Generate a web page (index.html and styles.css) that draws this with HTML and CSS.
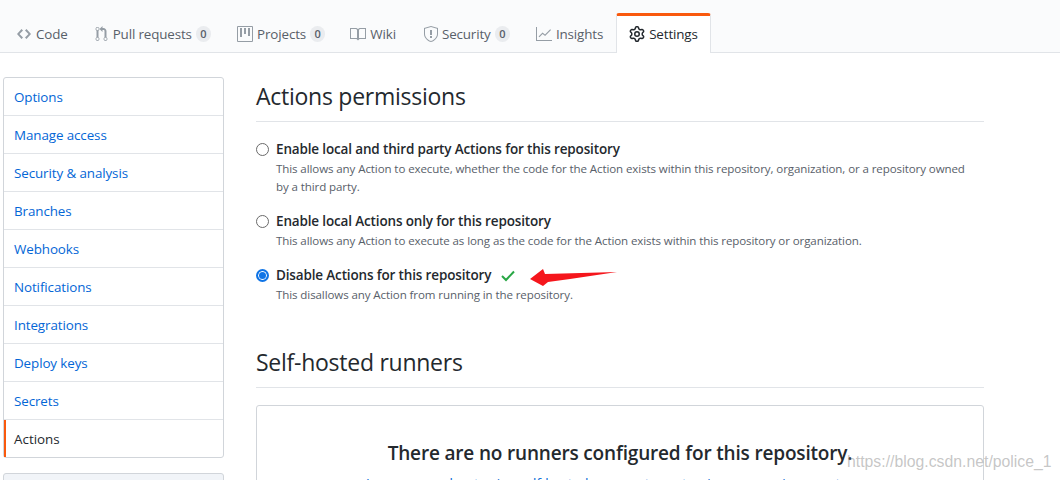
FILE: index.html
```html
<!DOCTYPE html>
<html lang="en">
<head>
<meta charset="utf-8">
<title>Actions permissions</title>
<link rel="stylesheet" href="styles.css">
</head>
<body>
<nav class="tabs">
  <a class="tab"><svg class="ico" viewBox="0 0 14 16" width="16" height="16"><path d="M9.5 3L8 4.5 11.5 8 8 11.5 9.5 13 14 8 9.5 3zm-5 0L0 8l4.5 5L6 11.5 2.5 8 6 4.5 4.5 3z"/></svg>Code</a>
  <a class="tab"><svg class="ico" viewBox="0 0 12 16" width="15" height="16"><path fill-rule="evenodd" d="M11 11.28V5c-.03-.78-.34-1.47-.94-2.06C9.46 2.35 8.78 2.03 8 2H7V0L4 3l3 3V4h1c.27.02.48.11.69.31.21.2.3.42.31.69v6.28A1.993 1.993 0 0010 15a1.993 1.993 0 001-3.72zm-1 2.92c-.66 0-1.2-.55-1.2-1.2 0-.65.55-1.2 1.2-1.2.65 0 1.2.55 1.2 1.2 0 .65-.55 1.2-1.2 1.2zM4 3c0-1.11-.89-2-2-2a1.993 1.993 0 00-1 3.72v6.56A1.993 1.993 0 002 15a1.993 1.993 0 001-3.72V4.72c.59-.34 1-.98 1-1.72zm-.8 10c0 .66-.55 1.2-1.2 1.2-.65 0-1.2-.55-1.2-1.2 0-.65.55-1.2 1.2-1.2.65 0 1.2.55 1.2 1.2zM2 4.2C1.34 4.2.8 3.65.8 3c0-.65.55-1.2 1.2-1.2.65 0 1.2.55 1.2 1.2 0 .65-.55 1.2-1.2 1.2z"/></svg>Pull requests<span class="count">0</span></a>
  <a class="tab tab-narrow"><svg class="ico" viewBox="0 0 16 16" width="16" height="16"><path fill-rule="evenodd" d="M1 0h14a1 1 0 011 1v14a1 1 0 01-1 1H1a1 1 0 01-1-1V1a1 1 0 011-1zm0 1v14h14V1H1zm2 1h2v9H3V2zm4 0h2v6H7V2zm4 0h2v8h-2V2z"/></svg>Projects<span class="count">0</span></a>
  <a class="tab tab-wide"><svg class="ico" viewBox="0 0 16 16" width="16" height="16"><path fill-rule="evenodd" d="M0 2h6.5L8 3l1.500-1H16v11H9.500L8 14.500 6.500 13H0V2zm1 1v9h6V4L6.200 3H1zm8 1v8h6V3H9.800L9 4z"/></svg>Wiki</a>
  <a class="tab"><svg class="ico" viewBox="0 0 14 16" width="14" height="16"><path fill-rule="evenodd" d="M0 2l7-2 7 2v6.020C14 12.690 8.690 16 7 16c-1.690 0-7-3.310-7-7.980V2zm1 .750L7 1l6 1.750v5.268C13 12.104 8.449 15 7 15c-1.449 0-6-2.896-6-6.982V2.750zM6 4h2v5H6V4zm0 6h2v2H6v-2z"/></svg>Security<span class="count">0</span></a>
  <a class="tab"><svg class="ico" viewBox="0 0 16 16" width="16" height="16"><path d="M1 1v13h15v1H0V1h1zm1.600 9.600l3.900-4 2.500 2 5.200-5.300.8.700-5.900 6-2.500-2-3.200 3.300-.8-.7z"/></svg>Insights</a>
  <a class="tab tab-active"><svg class="ico" viewBox="0 0 16 16" width="16" height="16"><path fill-rule="evenodd" d="M7.429 1.525a6.593 6.593 0 011.142 0c.036.003.108.036.137.146l.289 1.105c.147.56.55.967.997 1.189.174.086.341.183.501.29.417.278.97.423 1.53.27l1.102-.303c.11-.03.175.016.195.046.219.31.41.641.573.989.014.031.022.11-.059.19l-.815.806c-.411.406-.562.957-.53 1.456a4.588 4.588 0 010 .582c-.032.499.119 1.05.53 1.456l.815.806c.08.08.073.159.059.19a6.494 6.494 0 01-.573.99c-.02.029-.086.074-.195.045l-1.103-.303c-.559-.153-1.112-.008-1.529.27-.16.107-.327.204-.5.29-.449.222-.851.628-.998 1.189l-.289 1.105c-.029.11-.101.143-.137.146a6.613 6.613 0 01-1.142 0c-.036-.003-.108-.037-.137-.146l-.289-1.105c-.147-.56-.55-.967-.997-1.189a4.502 4.502 0 01-.501-.29c-.417-.278-.97-.423-1.53-.27l-1.102.303c-.11.03-.175-.016-.195-.046a6.492 6.492 0 01-.573-.989c-.014-.031-.022-.11.059-.19l.815-.806c.411-.406.562-.957.53-1.456a4.587 4.587 0 010-.582c.032-.499-.119-1.05-.53-1.456l-.815-.806c-.08-.08-.073-.159-.059-.19a6.44 6.44 0 01.573-.99c.02-.029.086-.075.195-.045l1.103.303c.559.153 1.112.008 1.529-.27.16-.107.327-.204.5-.29.449-.222.851-.628.998-1.189l.289-1.105c.029-.11.101-.143.137-.146zM8 0c-.236 0-.47.01-.701.03-.743.065-1.29.615-1.458 1.261l-.29 1.106c-.017.066-.078.158-.211.224a5.994 5.994 0 00-.668.386c-.123.082-.233.09-.3.071L3.27 2.776c-.644-.177-1.392.02-1.82.63a7.977 7.977 0 00-.704 1.217c-.315.675-.111 1.422.363 1.891l.815.806c.05.048.098.147.088.294a6.084 6.084 0 000 .772c.01.147-.038.246-.088.294l-.815.806c-.474.469-.678 1.216-.363 1.891.2.428.436.835.704 1.218.428.609 1.176.806 1.82.63l1.103-.303c.066-.019.176-.011.299.071.213.143.436.272.668.386.133.066.194.158.212.224l.289 1.106c.169.646.715 1.196 1.458 1.26a8.094 8.094 0 001.402 0c.743-.064 1.29-.614 1.458-1.26l.29-1.106c.017-.066.078-.158.211-.224a5.98 5.98 0 00.668-.386c.123-.082.233-.09.3-.071l1.102.302c.644.177 1.392-.02 1.82-.63.268-.382.505-.789.704-1.217.315-.675.111-1.422-.364-1.891l-.814-.806c-.05-.048-.098-.147-.088-.294a6.1 6.1 0 000-.772c-.01-.147.039-.246.088-.294l.814-.806c.475-.469.679-1.216.364-1.891a7.992 7.992 0 00-.704-1.218c-.428-.609-1.176-.806-1.82-.63l-1.103.303c-.066.019-.176.011-.299-.071a5.991 5.991 0 00-.668-.386c-.133-.066-.194-.158-.212-.224L10.16 1.29C9.99.645 9.444.095 8.701.031A8.094 8.094 0 008 0zm1.500 8a1.500 1.500 0 11-3 0 1.500 1.500 0 013 0zM11 8a3 3 0 11-6 0 3 3 0 016 0z"/></svg>Settings</a>
</nav>
<div class="page">
  <aside class="side">
    <ul class="menu">
      <li><a>Options</a></li>
      <li><a>Manage access</a></li>
      <li><a>Security &amp; analysis</a></li>
      <li><a>Branches</a></li>
      <li><a>Webhooks</a></li>
      <li><a>Notifications</a></li>
      <li><a>Integrations</a></li>
      <li><a>Deploy keys</a></li>
      <li><a>Secrets</a></li>
      <li class="current"><a>Actions</a></li>
    </ul>
    <div class="side-next"></div>
  </aside>
  <main class="main">
    <h2 class="heading">Actions permissions</h2>
    <div class="opt">
      <span class="radio"></span>
      <div>
        <div class="opt-title">Enable local and third party Actions for this repository</div>
        <p class="opt-note">This allows any Action to execute, whether the code for the Action exists within this repository, organization, or a repository owned by a third party.</p>
      </div>
    </div>
    <div class="opt">
      <span class="radio"></span>
      <div>
        <div class="opt-title">Enable local Actions only for this repository</div>
        <p class="opt-note">This allows any Action to execute as long as the code for the Action exists within this repository or organization.</p>
      </div>
    </div>
    <div class="opt">
      <span class="radio radio-on"></span>
      <div>
        <div class="opt-title">Disable Actions for this repository<svg class="check" viewBox="0 0 14 12" width="14" height="12"><path d="M1 6l4 4 8-8.500" fill="none" stroke="#28a745" stroke-width="2"/></svg></div>
        <p class="opt-note">This disallows any Action from running in the repository.</p>
      </div>
    </div>
    <h2 class="heading heading-two">Self-hosted runners</h2>
    <div class="blank">
      <h3 class="blank-title">There are no runners configured for this repository.</h3>
      <p class="blank-text">Learn more about using self-hosted runners to customize your environment now.</p>
    </div>
  </main>
</div>
<svg class="arrow" viewBox="0 0 90 24" width="90" height="24"><path d="M1 13L14 3l2 5 72-2-47 7-22 3-5 4z" fill="#f5161c"/></svg>
<span class="mark">https://blog.csdn.net/police_1</span>
</body>
</html>
```
FILE: styles.css
```css
* { box-sizing: border-box; }
html, body { margin: 0; height: 480px; overflow: hidden; background: #fff; }
body { position: relative; font-family: "Open Sans", "Noto Sans", sans-serif; color: #24292e; font-size: 13px; }
.tabs { display: flex; align-items: flex-end; height: 53px; padding-left: 3px; background: #fafbfc; border-bottom: 1px solid #e1e4e8; }
.tab { display: flex; align-items: center; gap: 4px; height: 39px; padding: 2px 13px 0; color: #586069; font-size: 13.4px; letter-spacing: -0.14px; white-space: nowrap; }
.tab-narrow { padding-right: 12px; }
.tab-wide { padding-right: 15px; }
.ico { fill: #959da5; flex: none; }
.count { padding: 0 4.5px; font-size: 11px; font-weight: 600; line-height: 16px; background: #eaecef; border-radius: 8px; color: #586069; letter-spacing: 0; }
.tab-active { height: 40px; margin-bottom: -1px; padding: 0 12px 1px; color: #24292e; background: #fff; border: 1px solid #e1e4e8; border-top: 3px solid #f9590d; border-bottom: 0; border-radius: 3px 3px 0 0; }
.tab-active .ico { fill: #24292e; }
.page { display: flex; padding: 24px 0 0 3px; }
.side { width: 221px; flex: none; }
.menu { margin: 0; padding: 0; list-style: none; border: 1px solid #d1d5da; border-radius: 3px; }
.menu li { height: 38px; border-top: 1px solid #e1e4e8; }
.menu li:first-child { border-top: 0; height: 37px; }
.menu a { display: flex; align-items: center; height: 100%; padding-left: 10px; color: #0366d6; font-size: 13.4px; letter-spacing: -0.1px; }
.menu .current { box-shadow: inset 2px 0 0 #f9590d; }
.menu .current a { color: #24292e; letter-spacing: 0; }
.side-next { height: 40px; margin-top: 15px; background: #f1f4f8; border: 1px solid #d1d5da; border-radius: 3px; }
.main { width: 728px; margin-left: 32px; }
.heading { margin: 0; padding: 0 0 5px; font-size: 23px; font-weight: 400; line-height: 39px; letter-spacing: -0.26px; border-bottom: 1px solid #e1e4e8; }
.heading-two { margin-top: 39px; }
.opt { display: flex; gap: 7px; margin-top: 15px; }
.heading + .opt { margin-top: 17px; }
.radio { width: 13px; height: 13px; margin-top: 4px; flex: none; border: 1px solid #6a6a6a; border-radius: 50%; background: #fff; }
.radio-on { border: 2px solid #0f74e6; box-shadow: inset 0 0 0 1px #fff; background: #0f74e6; }
.opt-title { font-size: 13.5px; font-weight: 600; line-height: 20px; letter-spacing: -0.15px; }
.check { margin-left: 10px; vertical-align: -2px; }
.opt-note { max-width: 698px; margin: 1px 0 0; font-size: 11.55px; line-height: 18px; color: #586069; letter-spacing: -0.1px; }
.blank { height: 120px; margin-top: 17px; padding-top: 33px; text-align: center; border: 1px solid #d1d5da; border-radius: 3px; }
.blank-title { margin: 0; font-size: 19px; font-weight: 600; line-height: 28px; letter-spacing: -0.17px; }
.blank-text { margin: 7px 0 0; font-size: 13.4px; color: #0366d6; }
.arrow { position: absolute; left: 529px; top: 266px; }
.mark { position: absolute; left: 847px; top: 453px; font-family: "Liberation Sans", sans-serif; font-size: 15.8px; color: rgba(150, 150, 150, .55); }
```
